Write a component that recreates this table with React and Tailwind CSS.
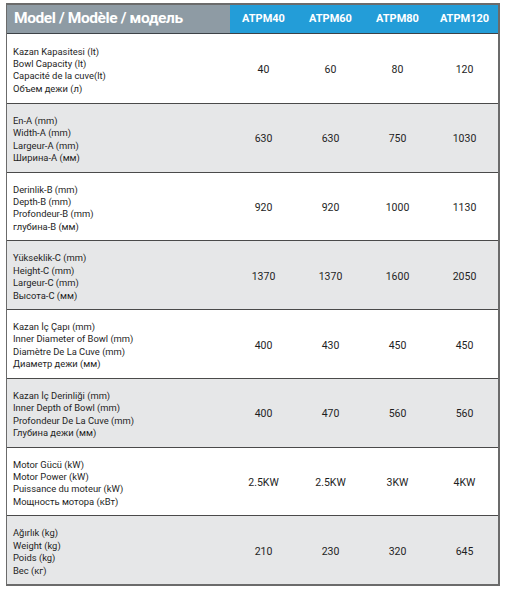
import React from 'react';

const models = ['ATPM40', 'ATPM60', 'ATPM80', 'ATPM120'];

const rows = [
  {
    label: ['Kazan Kapasitesi (lt)', 'Bowl Capacity (lt)', 'Capacité de la cuve(lt)', 'Объем дежи (л)'],
    values: ['40', '60', '80', '120'],
  },
  {
    label: ['En-A (mm)', 'Width-A (mm)', 'Largeur-A (mm)', 'Ширина-А (мм)'],
    values: ['630', '630', '750', '1030'],
  },
  {
    label: ['Derinlik-B (mm)', 'Depth-B (mm)', 'Profondeur-B (mm)', 'глубина-В (мм)'],
    values: ['920', '920', '1000', '1130'],
  },
  {
    label: ['Yükseklik-C (mm)', 'Height-C (mm)', 'Largeur-C (mm)', 'Высота-С (мм)'],
    values: ['1370', '1370', '1600', '2050'],
  },
  {
    label: ['Kazan İç Çapı (mm)', 'Inner Diameter of Bowl (mm)', 'Diamètre De La Cuve (mm)', 'Диаметр дежи (мм)'],
    values: ['400', '430', '450', '450'],
  },
  {
    label: ['Kazan İç Derinliği (mm)', 'Inner Depth of Bowl (mm)', 'Profondeur De La Cuve (mm)', 'Глубина дежи (мм)'],
    values: ['400', '470', '560', '560'],
  },
  {
    label: ['Motor Gücü (kW)', 'Motor Power (kW)', 'Puissance du moteur (kW)', 'Мощность мотора (кВт)'],
    values: ['2.5KW', '2.5KW', '3KW', '4KW'],
  },
  {
    label: ['Ağırlık (kg)', 'Weight (kg)', 'Poids (kg)', 'Вес (кг)'],
    values: ['210', '230', '320', '645'],
  },
];

export default function App() {
  return (
    <div className="w-[507px] h-[594px] bg-white pt-[3px] pl-[6px] font-['Roboto',sans-serif]">
      <div className="w-[494px] border-t-2 border-r-2 border-b-2 border-l border-[#6b6b6b]">
        {/* header */}
        <div className="flex h-[29px] border-b border-[#3d4247]">
          <div className="w-[223px] bg-[#8e9ba4] flex items-center pl-[7px] text-white font-bold text-[15.5px] tracking-[-0.4px]">
            Model / Modèle / модель
          </div>
          <div className="flex-1 grid grid-cols-4 bg-[#239dd8]">
            {models.map((m) => (
              <div key={m} className="flex items-center justify-center text-white font-bold text-[11px]">
                {m}
              </div>
            ))}
          </div>
        </div>

        {rows.map((row, i) => (
          <div
            key={i}
            className={`flex h-[68.75px] ${i > 0 ? 'border-t border-[#4a4a4a]' : ''} ${i % 2 === 1 ? 'bg-[#e6e7e8]' : 'bg-white'}`}
          >
            <div className="w-[223px] flex flex-col justify-center pl-[6px] pt-[4px] text-[9.4px] leading-[12.4px] text-[#1e1e1e]">
              {row.label.map((l) => (
                <div key={l}>{l}</div>
              ))}
            </div>
            <div className="flex-1 grid grid-cols-4">
              {row.values.map((v, j) => (
                <div key={j} className="flex items-center justify-center pt-[3px] text-[10.5px] text-[#1e1e1e]">
                  {v}
                </div>
              ))}
            </div>
          </div>
        ))}
      </div>
    </div>
  );
}
